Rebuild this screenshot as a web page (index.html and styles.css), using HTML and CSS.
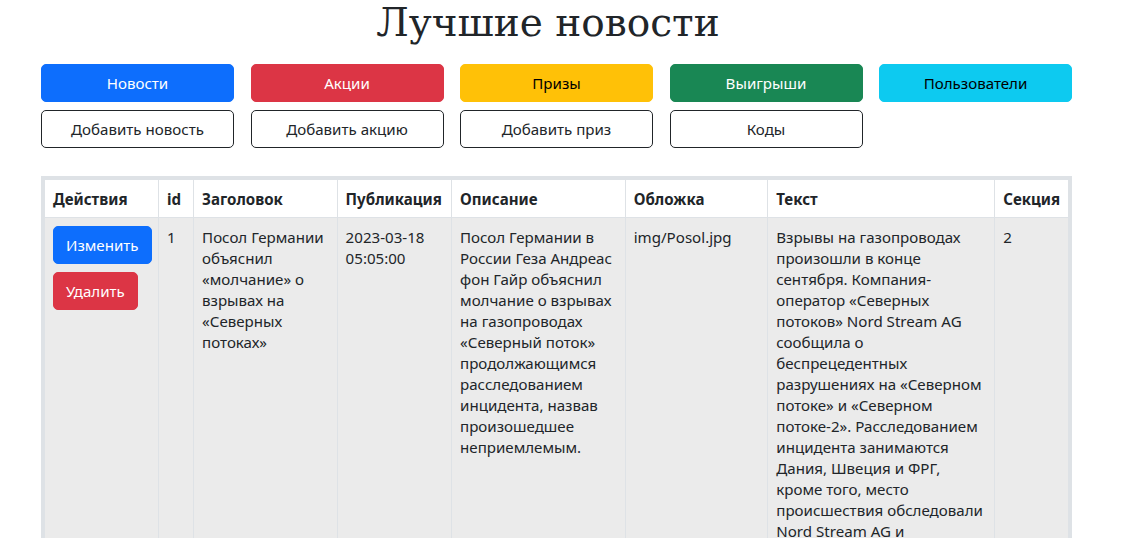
FILE: index.html
```html
<!DOCTYPE html>
<html lang="ru">
<head>
<meta charset="utf-8">
<title>Лучшие новости</title>
<link rel="stylesheet" href="styles.css">
</head>
<body>
<div class="page">
  <h1 class="title">Лучшие новости</h1>
  <nav class="menu">
    <a class="btn btn-primary" href="#">Новости</a>
    <a class="btn btn-danger" href="#">Акции</a>
    <a class="btn btn-warning" href="#">Призы</a>
    <a class="btn btn-success" href="#">Выигрыши</a>
    <a class="btn btn-info" href="#">Пользователи</a>
    <a class="btn btn-outline" href="#">Добавить новость</a>
    <a class="btn btn-outline" href="#">Добавить акцию</a>
    <a class="btn btn-outline" href="#">Добавить приз</a>
    <a class="btn btn-outline" href="#">Коды</a>
  </nav>
  <table class="news">
    <colgroup>
      <col class="c-actions">
      <col class="c-id">
      <col class="c-title">
      <col class="c-date">
      <col class="c-desc">
      <col class="c-cover">
      <col class="c-text">
      <col class="c-section">
    </colgroup>
    <thead>
      <tr>
        <th>Действия</th>
        <th>id</th>
        <th>Заголовок</th>
        <th>Публикация</th>
        <th>Описание</th>
        <th>Обложка</th>
        <th>Текст</th>
        <th>Секция</th>
      </tr>
    </thead>
    <tbody>
      <tr>
        <td class="cell-actions">
          <div class="actions">
            <a class="btn btn-primary" href="#">Изменить</a>
            <a class="btn btn-danger" href="#">Удалить</a>
          </div>
        </td>
        <td>1</td>
        <td>Посол Германии объяснил «молчание» о взрывах на «Северных потоках»</td>
        <td>2023-03-18 05:05:00</td>
        <td>Посол Германии в России Геза Андреас фон Гайр объяснил молчание о взрывах на газопроводах «Северный поток» продолжающимся расследованием инцидента, назвав произошедшее неприемлемым.</td>
        <td>img/Posol.jpg</td>
        <td>Взрывы на газопроводах произошли в конце сентября. Компания-оператор «Северных потоков» Nord Stream AG сообщила о беспрецедентных разрушениях на «Северном потоке» и «Северном потоке-2». Расследованием инцидента занимаются Дания, Швеция и ФРГ, кроме того, место происшествия обследовали Nord Stream AG и российские специалисты по просьбе оператора.</td>
        <td>2</td>
      </tr>
    </tbody>
  </table>
</div>
</body>
</html>
```

FILE: styles.css
```css
* {
  box-sizing: border-box;
}

html, body {
  margin: 0;
  padding: 0;
  background: #ffffff;
}

body {
  font-family: "Noto Sans", "Open Sans", sans-serif;
  font-size: 15.1px;
  line-height: 21px;
  color: #212529;
}

.page {
  width: 1031px;
  margin-left: 41px;
}

.title {
  margin: 0;
  padding: 0 17px 0 0;
  font-family: "DejaVu Serif", serif;
  font-weight: 400;
  font-size: 39px;
  line-height: 46px;
  text-align: center;
  color: #212529;
}

.menu {
  display: grid;
  grid-template-columns: repeat(5, 193px);
  column-gap: 16.5px;
  row-gap: 8px;
  margin-top: 18px;
}

.btn {
  display: inline-block;
  height: 38px;
  padding: 0 12px;
  border: 1px solid transparent;
  border-radius: 5px;
  font-size: 15.1px;
  line-height: 36px;
  text-align: center;
  text-decoration: none;
  white-space: nowrap;
}

.btn-primary { background: #0d6efd; border-color: #0d6efd; color: #fff; }
.btn-danger { background: #dc3545; border-color: #dc3545; color: #fff; }
.btn-warning { background: #ffc107; border-color: #ffc107; color: #000; }
.btn-success { background: #198754; border-color: #198754; color: #fff; }
.btn-info { background: #0dcaf0; border-color: #0dcaf0; color: #000; }
.btn-outline { background: #fff; border-color: #212529; color: #212529; }

.news {
  width: 1031px;
  margin-top: 28px;
  table-layout: fixed;
  border-collapse: collapse;
  border: 4px solid #dee2e6;
}

.c-actions { width: 115px; }
.c-id { width: 35px; }
.c-title { width: 143px; }
.c-date { width: 114px; }
.c-desc { width: 173px; }
.c-cover { width: 142px; }
.c-text { width: 226px; }
.c-section { width: 75px; }

.news th,
.news td {
  padding: 9px 8px 7px;
  border: 1px solid #dee2e6;
  text-align: left;
  vertical-align: top;
}

.news th {
  background: #ffffff;
  font-weight: 700;
  white-space: nowrap;
}

.news td {
  background: #ebebeb;
  padding-bottom: 40px;
}

.news td.cell-actions {
  padding-top: 8px;
}

.actions {
  display: flex;
  flex-direction: column;
  align-items: flex-start;
  gap: 8px;
}
```
